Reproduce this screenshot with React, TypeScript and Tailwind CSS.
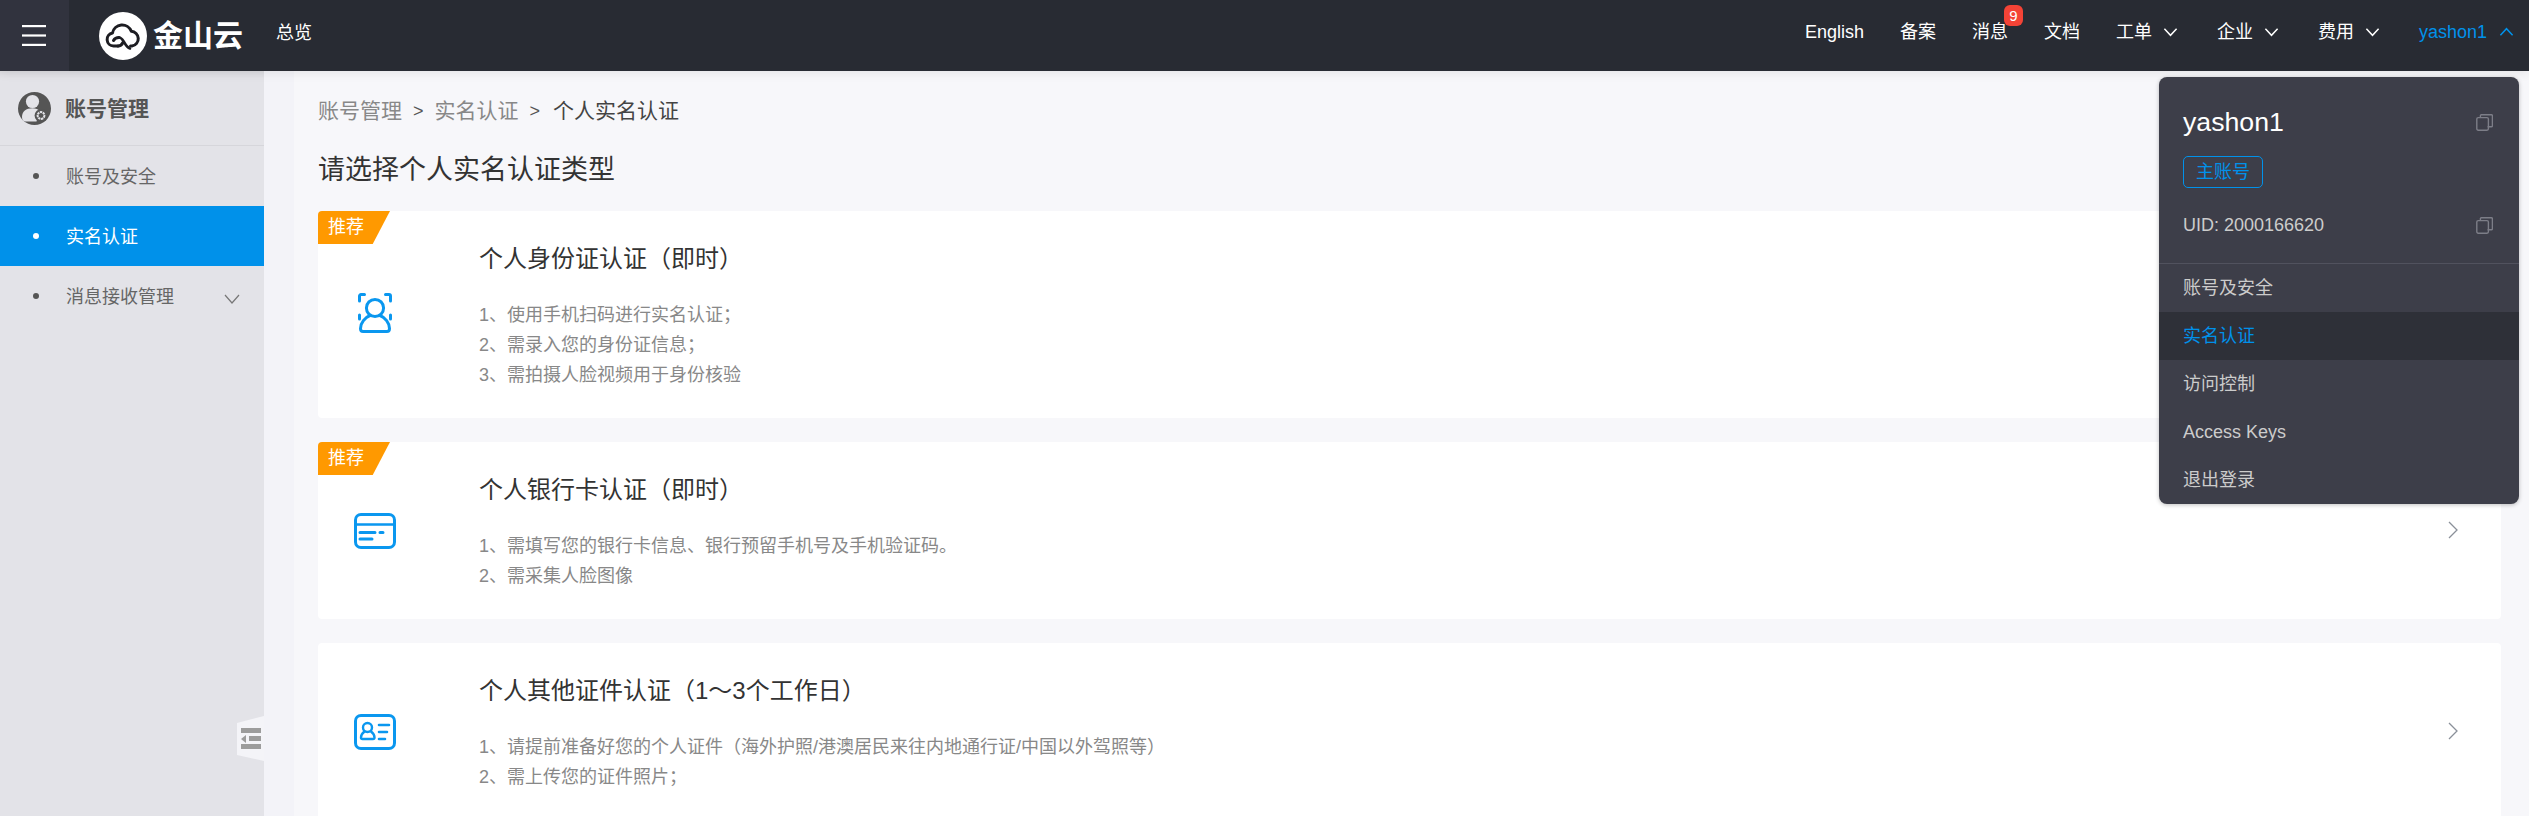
import React from "react";

const FONT = "font-['Liberation_Sans','Noto_Sans_CJK_SC',sans-serif]";

function Chevron({ up, className }: { up?: boolean; className: string }) {
  return (
    <svg viewBox="0 0 16 10" className={className} fill="none" stroke="currentColor" strokeWidth="1.6">
      <path d={up ? "M1.5 8.5 8 1.5l6.5 7" : "M1.5 1.5 8 8.5l6.5-7"} />
    </svg>
  );
}

function CopyIcon() {
  return (
    <svg viewBox="0 0 17 17" className="w-[17px] h-[17px]" fill="none" stroke="#7d7e88" strokeWidth="1.4">
      <rect x="0.8" y="3.6" width="11.6" height="12.6" rx="1.4" />
      <path d="M4.4 3.4V1.8a1 1 0 0 1 1-1h10a1 1 0 0 1 1 1v10a1 1 0 0 1-1 1h-3.8" />
    </svg>
  );
}

function Logo() {
  return (
    <svg viewBox="0 0 48 48" className="w-[48px] h-[48px] shrink-0">
      <circle cx="24" cy="24" r="24" fill="#fff" />
      <g fill="none" stroke="#1d1d22" strokeWidth="3" strokeLinecap="round" strokeLinejoin="round">
        <path d="M19 34h-4.500a6.500 6.500 0 0 1-1-12.900a9.800 9.800 0 0 1 18.800-1.800a7.400 7.400 0 0 1 .7 14.700h-1.500" />
        <path d="M20 25.500c-2.500 0-4.500 1.200-5.500 3M24 30.500c-1 2-2.500 3.500-5 3.500" />
        <path d="M20 25.500c2.500 0 3.500 2 5 4.500c1.500 2.500 3 5.500 6 6.500" strokeWidth="2.600" />
      </g>
    </svg>
  );
}

function AccountIcon() {
  return (
    <svg viewBox="0 0 33 33" className="w-[33px] h-[33px] shrink-0">
      <circle cx="16.5" cy="16.5" r="16.5" fill="#555" />
      <circle cx="14.500" cy="9.500" r="6.600" fill="#e3e3e8" />
      <path d="M4 25c0-5.500 4-8.800 10.500-8.800 3.400 0 5.600 1 7 2.400l-3 10.900H7.500C5.500 29.500 4 28 4 25z" fill="#e3e3e8" />
      <circle cx="23" cy="23.500" r="6.400" fill="#555" />
      <circle cx="23" cy="23.500" r="3.400" fill="none" stroke="#e3e3e8" strokeWidth="2" strokeDasharray="2.300 0.600" />
    </svg>
  );
}

function FaceIcon() {
  return (
    <svg viewBox="0 0 34 40" className="w-[34px] h-[40px]" fill="none" stroke="#0a97ef" strokeWidth="3" strokeLinecap="round" strokeLinejoin="round">
      <path d="M1.5 8V3a1.5 1.5 0 0 1 1.5-1.5h3.5M27.5 1.5H31A1.5 1.5 0 0 1 32.5 3v5M1.5 22v4M32.5 22v4" />
      <circle cx="17" cy="15" r="8.6" />
      <path d="M12 22.5c-5 2-9.5 7.5-9.5 13 0 1.8 1 3 2.6 3h23.8c1.6 0 2.6-1.2 2.6-3 0-5.500-4.500-11-9.500-13" />
    </svg>
  );
}

function BankIcon() {
  return (
    <svg viewBox="0 0 42 36" className="w-[42px] h-[36px]" fill="none" stroke="#0a97ef" strokeLinecap="round">
      <rect x="1.500" y="1.500" width="39" height="33" rx="5.500" strokeWidth="3" />
      <path d="M2 11.500h38" strokeWidth="2.600" />
      <path d="M6 19.500h15M26 19.500h3M6 26h12" strokeWidth="3" />
    </svg>
  );
}

function IdIcon() {
  return (
    <svg viewBox="0 0 42 36" className="w-[42px] h-[36px]" fill="none" stroke="#0a97ef" strokeLinecap="round">
      <rect x="1.500" y="1.500" width="39" height="33" rx="5.500" strokeWidth="3" />
      <circle cx="13.500" cy="13.500" r="4.500" strokeWidth="2.400" />
      <path d="M10.500 17.500c-2 1.500-3.500 3.500-3.500 6 0 1 .6 1.500 1.500 1.500h10.500c.9 0 1.500-.5 1.500-1.500 0-2.500-1.500-4.500-3.500-6" strokeWidth="2.400" />
      <path d="M25 11h10M25 18h8M25 25h6" strokeWidth="2.600" />
    </svg>
  );
}

function NavItem({ label, caret }: { label: string; caret?: boolean }) {
  return (
    <div className="flex items-center">
      <span>{label}</span>
      {caret && <Chevron className="w-[15px] h-[10px] ml-[11px] mr-[3px]" />}
    </div>
  );
}

function Card({
  icon,
  iconTop,
  title,
  lines,
  tag,
}: {
  icon: React.ReactNode;
  iconTop: string;
  title: string;
  lines: string[];
  tag?: boolean;
}) {
  return (
    <div className="relative flex items-start bg-white rounded-[4px] pt-[33px] pb-[28px] mb-[24px] shrink-0">
      {tag && (
        <div className="absolute left-0 top-0 w-[72px] h-[33px] bg-[#ff9900] text-white text-[18px] leading-[33px] pl-[10px] rounded-tl-[4px] [clip-path:polygon(0_0,100%_0,76%_100%,0_100%)]">
          推荐
        </div>
      )}
      <div className={`w-[161px] pl-[36px] shrink-0 ${iconTop}`}>
        <div className="w-[42px] flex justify-center">{icon}</div>
      </div>
      <div className="flex-1">
        <div className="text-[24px] leading-[30px] text-[#333]">{title}</div>
        <div className="mt-[26px] text-[18px] leading-[30px] text-[#888]">
          {lines.map((l) => (
            <div key={l}>{l}</div>
          ))}
        </div>
      </div>
      <div className="w-[53px] shrink-0 self-center mb-[6px]">
        <svg viewBox="0 0 10 18" className="w-[10px] h-[18px]" fill="none" stroke="#8a9099" strokeWidth="1.300">
          <path d="M1 1l8 8-8 8" />
        </svg>
      </div>
    </div>
  );
}

export default function App() {
  return (
    <div className={`${FONT} relative w-[2529px] h-[816px] overflow-hidden bg-[#f7f7fa] flex flex-col`}>
      {/* Header */}
      <header className="relative z-10 h-[71px] shrink-0 bg-[#282b33] text-white flex shadow-[0_2px_10px_rgba(0,0,0,0.08)]">
        <div className="w-[69px] bg-[#31333e] flex items-center justify-center pr-[2px]">
          <svg viewBox="0 0 24 21" className="w-[24px] h-[21px]" fill="#fff">
            <rect y="0" width="24" height="2.200" />
            <rect y="9.400" width="24" height="2.200" />
            <rect y="18.800" width="24" height="2.200" />
          </svg>
        </div>
        <div className="flex items-center ml-[30px]">
          <Logo />
          <span className="ml-[6px] text-[30px] font-bold leading-none">金山云</span>
          <span className="ml-[33px] text-[18px] mt-[-4px]">总览</span>
        </div>
        <div className="ml-auto flex items-start pt-[19px] pr-[15px] gap-[36px] text-[18px] leading-[26px]">
          <NavItem label="English" />
          <NavItem label="备案" />
          <div className="relative">
            <NavItem label="消息" />
            <span className="absolute left-[32px] top-[-14px] w-[19px] h-[21px] rounded-[6px] bg-[#f44336] text-[15px] leading-[21px] text-center">
              9
            </span>
          </div>
          <NavItem label="文档" />
          <NavItem label="工单" caret />
          <NavItem label="企业" caret />
          <NavItem label="费用" caret />
          <div className="flex items-center text-[#0091ea]">
            <span>yashon1</span>
            <Chevron up className="w-[15px] h-[10px] ml-[12px]" />
          </div>
        </div>
      </header>

      <div className="flex flex-1 min-h-0">
        {/* Sidebar */}
        <aside className="relative w-[264px] shrink-0 bg-[#e3e3e8] shadow-[inset_0_8px_8px_-8px_rgba(0,0,0,0.08)]">
          <div className="h-[75px] flex items-center pl-[18px] border-b-[1.500px] border-[#d6d6db] box-border">
            <AccountIcon />
            <span className="ml-[14px] pt-[2px] text-[21px] font-bold text-[#555]">账号管理</span>
          </div>
          <div className="flex items-center h-[60px] text-[18px] text-[#666]">
            <span className="w-[6px] h-[6px] rounded-full bg-[#555] ml-[33px]" />
            <span className="ml-[27px] pt-[2px]">账号及安全</span>
          </div>
          <div className="flex items-center h-[60px] text-[18px] text-white bg-[#0091ea]">
            <span className="w-[6px] h-[6px] rounded-full bg-white ml-[33px]" />
            <span className="ml-[27px] pt-[2px]">实名认证</span>
          </div>
          <div className="flex items-center h-[60px] text-[18px] text-[#666]">
            <span className="w-[6px] h-[6px] rounded-full bg-[#555] ml-[33px]" />
            <span className="ml-[27px] pt-[2px]">消息接收管理</span>
            <svg viewBox="0 0 16 10" className="w-[16px] h-[10px] ml-[50px] mt-[6px]" fill="none" stroke="#777" strokeWidth="1.200">
              <path d="M1 1l7 8 7-8" />
            </svg>
          </div>
          {/* collapse toggle */}
          <div className="absolute right-0 top-[645px] w-[27px] h-[45px] bg-[#f4f4f8] flex flex-col items-center justify-center gap-[3px] [clip-path:polygon(0_7px,100%_0,100%_100%,0_39px)]">
            <span className="w-[20px] h-[5px] bg-[#9c9c9c]" />
            <span className="w-[20px] h-[5px] flex items-center gap-[2px]">
              <span className="w-0 h-0 border-y-[4px] border-y-transparent border-r-[5px] border-r-[#9c9c9c]" />
              <span className="flex-1 h-[5px] bg-[#9c9c9c] ml-[1px]" />
            </span>
            <span className="w-[20px] h-[5px] bg-[#9c9c9c]" />
          </div>
        </aside>

        {/* Main */}
        <div className="w-[30px] shrink-0 bg-[#f3f3f8]" />
        <main className="flex-1 min-w-0 flex flex-col pl-[24px] pr-[28px] overflow-hidden">
          <div className="mt-[26px] h-[28px] flex items-center text-[21px] text-[#888]">
            <span>账号管理</span>
            <span className="mx-[11px] text-[#555] text-[18px]">&gt;</span>
            <span>实名认证</span>
            <span className="ml-[11px] mr-[13px] text-[#555] text-[18px]">&gt;</span>
            <span className="text-[#444]">个人实名认证</span>
          </div>
          <h1 className="mt-[27px] h-[36px] leading-[36px] text-[27px] font-normal text-[#333] mb-[23px] shrink-0">
            请选择个人实名认证类型
          </h1>
          <Card
            tag
            icon={<FaceIcon />}
            iconTop="mt-[49px]"
            title="个人身份证认证（即时）"
            lines={["1、使用手机扫码进行实名认证；", "2、需录入您的身份证信息；", "3、需拍摄人脸视频用于身份核验"]}
          />
          <Card
            tag
            icon={<BankIcon />}
            iconTop="mt-[38px]"
            title="个人银行卡认证（即时）"
            lines={["1、需填写您的银行卡信息、银行预留手机号及手机验证码。", "2、需采集人脸图像"]}
          />
          <Card
            icon={<IdIcon />}
            iconTop="mt-[38px]"
            title="个人其他证件认证（1～3个工作日）"
            lines={["1、请提前准备好您的个人证件（海外护照/港澳居民来往内地通行证/中国以外驾照等）", "2、需上传您的证件照片；"]}
          />
        </main>
      </div>

      {/* Account dropdown */}
      <div className="absolute z-20 left-[2159px] top-[77px] w-[360px] h-[427px] rounded-[8px] bg-[#3d3e49] shadow-[0_1px_4px_rgba(0,0,0,0.25)] overflow-hidden">
        <div className="h-[187px] box-border border-b-[1.500px] border-[#51525e] pl-[24px] pr-[26px]">
          <div className="flex items-center justify-between pt-[28px] h-[34px] box-content">
            <span className="text-[26.700px] text-white">yashon1</span>
            <CopyIcon />
          </div>
          <div className="mt-[17px] w-[80px] h-[32px] box-border border border-[#0091ea] rounded-[5px] text-[#0091ea] text-[18px] leading-[30px] text-center">
            主账号
          </div>
          <div className="mt-[24px] flex items-center justify-between text-[18px] text-[#ccc] h-[26px]">
            <span>UID: 2000166620</span>
            <CopyIcon />
          </div>
        </div>
        <div className="text-[18px] text-[#ccc]">
          <div className="h-[48px] leading-[48px] pl-[24px]">账号及安全</div>
          <div className="h-[48px] leading-[48px] pl-[24px] bg-[#2e3038] text-[#0091ea]">实名认证</div>
          <div className="h-[48px] leading-[48px] pl-[24px]">访问控制</div>
          <div className="h-[48px] leading-[48px] pl-[24px]">Access Keys</div>
          <div className="h-[48px] leading-[48px] pl-[24px]">退出登录</div>
        </div>
      </div>
    </div>
  );
}
